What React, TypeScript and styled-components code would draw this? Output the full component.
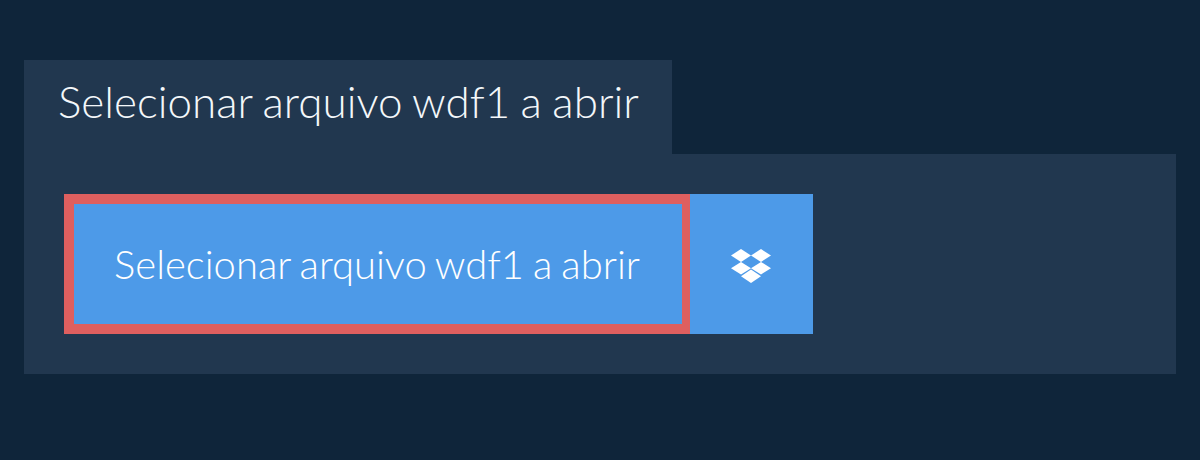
import styled, { createGlobalStyle } from "styled-components";

const GlobalStyle = createGlobalStyle`
  html, body {
    margin: 0;
    padding: 0;
    background: #0f253a;
  }
`;

const Page = styled.div`
  box-sizing: border-box;
  width: 1200px;
  height: 460px;
  padding: 60px 24px 0;
  font-family: Lato, "Liberation Sans", sans-serif;
`;

const Tab = styled.div`
  box-sizing: border-box;
  width: 648px;
  height: 94px;
  padding: 16px 0 0 34px;
  background: #21374f;
  color: #f4f7fa;
  font-size: 44px;
  font-weight: 300;
  line-height: 50px;
  word-spacing: -1.5px;
  white-space: nowrap;
`;

const Panel = styled.div`
  display: flex;
  height: 140px;
  padding: 40px;
  background: #21374f;
`;

const SelectButton = styled.button`
  box-sizing: border-box;
  width: 626px;
  height: 140px;
  padding: 0 2px 0 0;
  border: 10px solid #de5f5f;
  border-right-width: 8px;
  background: #4d9ae8;
  color: #fff;
  font-family: inherit;
  font-size: 40px;
  font-weight: 300;
  word-spacing: -1.9px;
  white-space: nowrap;
`;

const DropboxButton = styled.button`
  display: flex;
  align-items: center;
  justify-content: center;
  width: 123px;
  height: 140px;
  padding: 4px 1px 0 0;
  border: 0;
  background: #4d9ae8;
`;

const App = () => (
  <Page>
    <GlobalStyle />
    <Tab>Selecionar arquivo wdf1 a abrir</Tab>
    <Panel>
      <SelectButton>Selecionar arquivo wdf1 a abrir</SelectButton>
      <DropboxButton>
        <svg width="40" height="34" viewBox="0 0 40 34" fill="#fff">
          <path d="M10 0 20 6.5 10 13 0 6.5Z" />
          <path d="M30 0 40 6.5 30 13 20 6.5Z" />
          <path d="M10 13 20 19.2 10 25.5 0 19.2Z" />
          <path d="M30 13 40 19.2 30 25.5 20 19.2Z" />
          <path d="M20 20.5 30 27.2 20 34 10 27.2Z" />
        </svg>
      </DropboxButton>
    </Panel>
  </Page>
);

export default App;
